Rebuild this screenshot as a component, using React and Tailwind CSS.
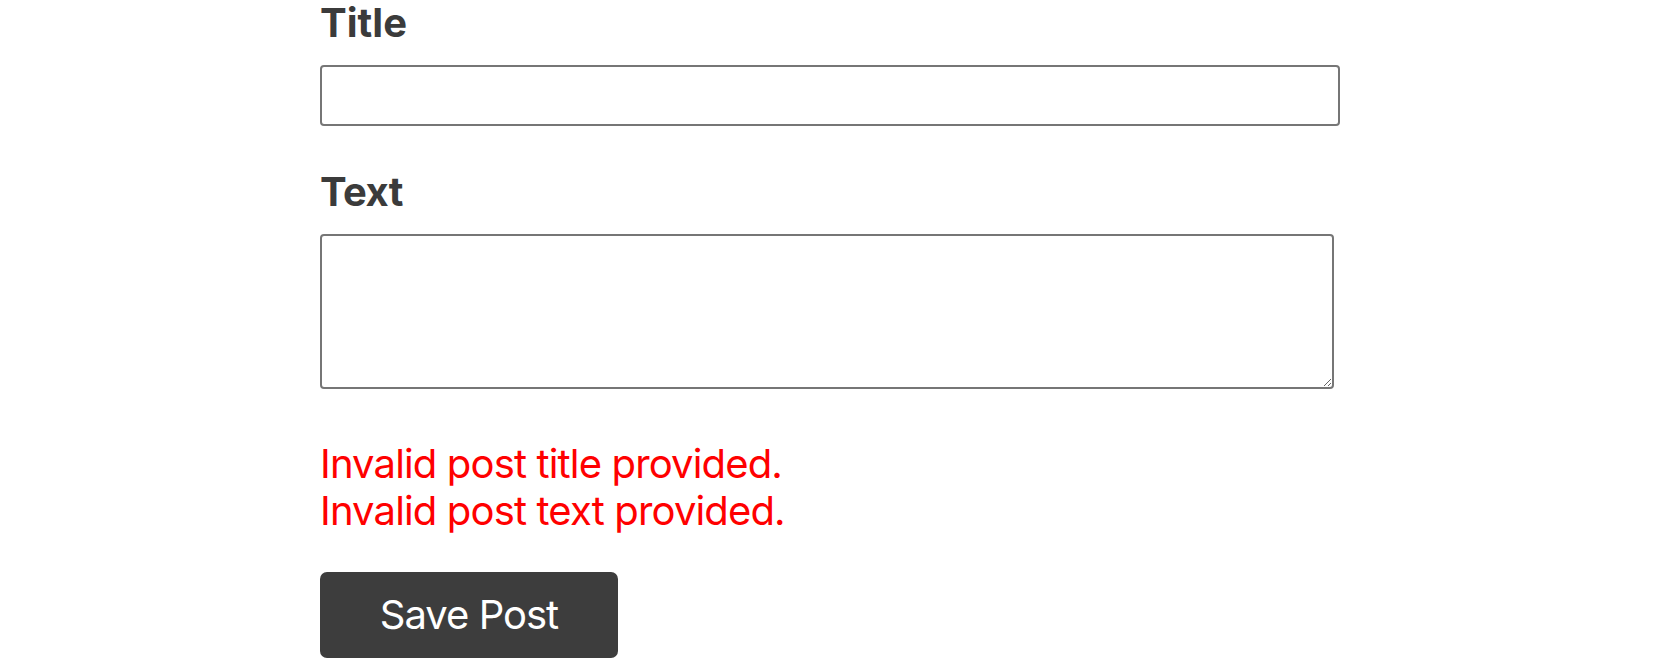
import React, { useState } from "react";

const PostForm = () => {
  const [title, setTitle] = useState("")
  const [text, setText] = useState("")

  return (
    <div className="w-full min-h-screen bg-white font-['Inter',sans-serif]">
      <form className="w-[1020px] mx-auto flex flex-col" onSubmit={(e) => e.preventDefault()}>
        <label className="text-[40px] leading-[45px] font-bold text-[#3b3b3b]">Title</label>
        <input
          type="text"
          value={title}
          onChange={(e) => setTitle(e.target.value)}
          className="mt-[20px] h-[61px] w-[1020px] border-2 border-[#767676] rounded-[4px] px-3 text-[32px] focus:outline-none"
        />

        <label className="mt-[43px] text-[40px] leading-[45px] font-bold text-[#3b3b3b] tracking-[-0.5px]">Text</label>
        <textarea
          value={text}
          onChange={(e) => setText(e.target.value)}
          className="mt-[20px] h-[155px] w-[1014px] border-2 border-[#767676] rounded-[4px] p-3 text-[32px] focus:outline-none"
        />

        <div className="mt-[51px] text-[40px] leading-[47px] text-[#ff0000] tracking-[-0.85px]">
          <p>Invalid post title provided.</p>
          <p>Invalid post text provided.</p>
        </div>

        <button
          type="submit"
          className="mt-[38px] w-[298px] h-[86px] rounded-[7px] bg-[#3d3d3d] text-white text-[40px] leading-none tracking-[-1px]"
        >
          Save Post
        </button>
      </form>
    </div>
  )
}

export default PostForm
